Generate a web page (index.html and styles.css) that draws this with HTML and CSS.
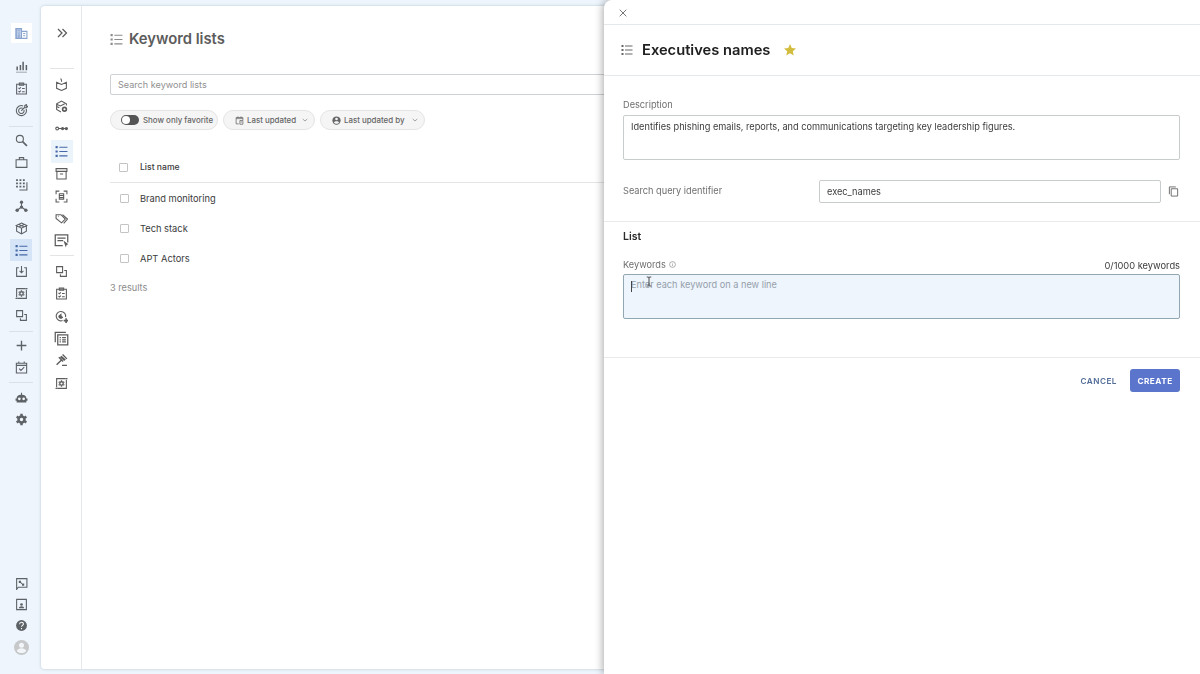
FILE: index.html
```html
<!DOCTYPE html>
<html lang="en">
<head>
    <meta charset="UTF-8">
    <meta name="viewport" content="width=device-width, initial-scale=1.0">
    <title>Keyword lists</title>
    <link rel="stylesheet" href="styles.css">
</head>
<body>
    <!-- icons used more than once -->
    <svg class="sprite">
        <symbol id="list" viewBox="0 0 24 24"><path d="M1 4h4M1 12h4M1 20h4" stroke-width="4"/><path d="M8 4h15M8 12h15M8 20h15"/></symbol>
        <symbol id="clipboard" viewBox="0 0 24 24"><path d="M3 4h18v18H3z"/><path d="M8 2h8v4H8z"/><path d="M6.500 11l1.500 1.500 3-2.500M6.500 17l1.500 1.500 3-2.500M13 12h5M13 18h5"/></symbol>
        <symbol id="squares" viewBox="0 0 24 24"><path d="M3 3h11v11H3z"/><path d="M17 10h4v11H10v-4"/></symbol>
        <symbol id="gearbox" viewBox="0 0 24 24"><path d="M3 19V3h16M21 5v16H5"/><circle cx="12" cy="12" r="3.200" stroke-width="2.500"/><path d="M12 6v2M12 16v2M6.800 9l1.800 1M15.400 14l1.800 1M6.800 15l1.800-1M15.400 10l1.800-1M1 21h4M19 3h4" stroke-width="2.500"/></symbol>
        <symbol id="chevron" viewBox="0 0 24 24"><path d="M3 8l9 8 9-8"/></symbol>
    </svg>

    <div class="app">
        <nav class="primary">
            <a class="logo"><svg viewBox="0 0 24 24"><path class="tower" d="M2 3h10v18H2z"/><path d="M12 8h10v13H2V3h10v18M5 7h4M5 11h4M5 15h4M5 18h4M15 12h4M15 16h4"/></svg></a>
            <a class="item"><svg viewBox="0 0 24 24"><path d="M4 12v7M10 9v10M15 3v16M21 9v10" stroke-width="2.800"/><path d="M2 22.500h20" stroke-width="1"/></svg></a>
            <a class="item"><svg><use href="#clipboard"/></svg></a>
            <a class="item"><svg viewBox="0 0 24 24"><path d="M15 3.500A9.300 9.300 0 1 0 20.500 9M14 8a5 5 0 1 0 2.500 3M11.500 12.500L18 6V3l3-2v3h3l-3 3h-3"/></svg></a>
            <span class="line"></span>
            <a class="item"><svg viewBox="0 0 24 24"><circle cx="9" cy="9" r="6.500"/><path d="M14 14l8 8" stroke-width="3"/></svg></a>
            <a class="item"><svg viewBox="0 0 24 24"><path d="M2 7h20v14H2zM8 7V3h8v4"/></svg></a>
            <a class="item"><svg viewBox="0 0 24 24"><path d="M2 4h16M2 10h16M2 16h16" stroke-width="3.400" stroke-dasharray="3.400 2.900"/><path d="M22 8v14H8"/></svg></a>
            <a class="item"><svg viewBox="0 0 24 24"><path d="M12 5v8L4 19M12 13l8 6"/><g class="fill"><circle cx="12" cy="4" r="3"/><circle cx="12" cy="13" r="3"/><circle cx="4" cy="19" r="3.200"/><circle cx="20" cy="19" r="3.200"/></g></svg></a>
            <a class="item"><svg viewBox="0 0 24 24"><path d="M12 2l10 4.500-10 5-10-5zM3 8v9l9 5 9-5V8M12 12v10M8 5l9 4M16 5L7 9"/></svg></a>
            <a class="item active"><svg><use href="#list"/></svg></a>
            <a class="item"><svg viewBox="0 0 24 24"><path d="M7 5H3v16h18V5h-4M12 2v12M8.500 11l3.500 3.500 3.500-3.500"/></svg></a>
            <a class="item"><svg><use href="#gearbox"/></svg></a>
            <a class="item"><svg><use href="#squares"/></svg></a>
            <span class="line"></span>
            <a class="item"><svg viewBox="0 0 24 24"><path d="M12 3v18M3 12h18" stroke-width="2.500"/></svg></a>
            <a class="item"><svg viewBox="0 0 24 24"><path d="M2.500 4h19v18h-19zM2.500 8h19M7 1v4M17 1v4M7.500 14l3.500 3.500 6-6"/></svg></a>
            <span class="line"></span>
            <a class="item"><svg viewBox="0 0 24 24"><path class="fill" d="M11 7V3h2v4c5 0 8 3 8 7h2v4h-2v3H3v-3H1v-4h2c0-4 3-7 8-7z"/><circle class="hole" cx="8" cy="14.500" r="2.500"/><circle class="hole" cx="16" cy="14.500" r="2.500"/></svg></a>
            <a class="item"><svg viewBox="0 0 24 24"><circle cx="12" cy="12" r="5.500" stroke-width="4.500"/><path d="M12 1.500v4M12 18.500v4M3 6.700l3.400 2M17.600 15.300l3.400 2M3 17.300l3.400-2M17.600 8.700l3.400-2" stroke-width="4.500"/></svg></a>
            <div class="bottom">
                <a class="item"><svg viewBox="0 0 24 24"><path d="M3 23V3h19v16H6zM8 8l8 7M8 11V8h3M16 12v3h-3"/></svg></a>
                <a class="item"><svg viewBox="0 0 24 24"><path d="M3 2.500h18v19H3z"/><circle class="fill" cx="12" cy="12" r="2.500"/><path class="fill" d="M7 19c0-5 10-5 10 0z"/></svg></a>
                <a class="item"><svg viewBox="0 0 24 24"><circle class="fill" cx="12" cy="12" r="10"/><path class="mark" d="M8.500 9.500c0-5 7-4.500 7-.5 0 3-3.500 2.500-3.500 5.500M12 16.500v2.500"/></svg></a>
                <a class="item avatar"><svg viewBox="0 0 24 24"><circle class="fill" cx="12" cy="12" r="12"/><circle class="face" cx="12" cy="8.500" r="4"/><path class="face" d="M4.500 17.500c2-5.500 13-5.500 15 0-3.500 4.500-11.500 4.500-15 0z"/></svg></a>
            </div>
        </nav>

        <div class="page">
            <nav class="secondary">
                <a class="expand"><svg viewBox="0 0 24 24"><path d="M4 4l8 8-8 8M13 4l8 8-8 8"/></svg></a>
                <span class="line"></span>
                <a class="item"><svg viewBox="0 0 24 24"><path d="M12 12L3 8v11l9 4 9-4V8zM12 4v3M10.500 1l1.500 3"/></svg></a>
                <a class="item"><svg viewBox="0 0 24 24"><path d="M11 22l-8-4.500V7l9-5 9 5v3M3 12l5 2.500M3 8l7 3 8-4"/><circle cx="17.500" cy="17" r="3.500" stroke-width="3"/></svg></a>
                <a class="item"><svg viewBox="0 0 24 24"><circle cx="4" cy="12" r="2.600"/><path d="M7 12h14"/><circle class="fill" cx="14" cy="12" r="3"/><circle class="fill" cx="21" cy="12" r="3"/></svg></a>
                <a class="item active"><svg><use href="#list"/></svg></a>
                <a class="item"><svg viewBox="0 0 24 24"><path d="M2 3h20v5H2zM3.500 8v14h17V8M9 13h6"/></svg></a>
                <a class="item"><svg viewBox="0 0 24 24"><path d="M2 8V2h6M16 2h6v6M22 16v6h-6M8 22H2v-6M8 7h8v10H8zM8 10h8M8 14h8"/></svg></a>
                <a class="item"><svg viewBox="0 0 24 24"><path d="M2 5h9l8 8-7 7L2 12zM14 5l9 8-7 8M5.500 8h1"/></svg></a>
                <a class="item big"><svg viewBox="0 0 24 24"><path d="M14 20H2V3h20v12M5.500 8h13M5.500 12h9"/><path class="fill" d="M15 12l8 6-3 1-1 4z"/></svg></a>
                <span class="line"></span>
                <a class="item"><svg><use href="#squares"/></svg></a>
                <a class="item"><svg><use href="#clipboard"/></svg></a>
                <a class="item"><svg viewBox="0 0 24 24"><path d="M14 19.500A8.700 8.700 0 1 1 19.500 13"/><path class="fill" d="M12 6v5l3 2c-1 5-9 4-9-2zM19 15v3h-3v3h3v3h3v-3h2v-3h-2v-3z"/></svg></a>
                <a class="item big"><svg viewBox="0 0 24 24"><path d="M2 18V2h17M6 6h16v16H6zM9 10.500h2M9 14h2M9 17.500h2M13 10.500h6M13 14h6M13 17.500h6"/></svg></a>
                <a class="item"><svg viewBox="0 0 24 24"><path class="fill" d="M12 3l8 7-3 3-8-7z"/><path d="M14 1l8 8M7 6l8 8M12 11l-9 9M13 21h9" stroke-width="2.500"/></svg></a>
                <a class="item"><svg><use href="#gearbox"/></svg></a>
            </nav>

            <main class="content">
                <h1><svg><use href="#list"/></svg><span>Keyword lists</span></h1>
                <div class="search">Search keyword lists</div>
                <div class="filters">
                    <div class="chip favorite"><i class="toggle"></i><span>Show only favorite</span></div>
                    <div class="chip"><svg class="chip-icon" viewBox="0 0 24 24"><path d="M21 11V4H3v17h7M3 7h18M8 1v4M16 1v4M13 12h8v10h-8zM15 16h4"/></svg><span>Last updated</span><svg class="arrow"><use href="#chevron"/></svg></div>
                    <div class="chip"><svg class="chip-icon" viewBox="0 0 24 24"><circle class="fill" cx="12" cy="12" r="11"/><circle class="face" cx="12" cy="8" r="3.500"/><path class="face" d="M5 17c2-4 12-4 14 0-3 5-11 5-14 0z"/></svg><span>Last updated by</span><svg class="arrow"><use href="#chevron"/></svg></div>
                </div>
                <div class="table">
                    <div class="row head"><i class="checkbox"></i><span>List name</span></div>
                    <div class="row"><i class="checkbox"></i><span>Brand monitoring</span></div>
                    <div class="row"><i class="checkbox"></i><span>Tech stack</span></div>
                    <div class="row"><i class="checkbox"></i><span>APT Actors</span></div>
                </div>
                <p class="results">3 results</p>
            </main>
        </div>
    </div>

    <aside class="drawer">
        <div class="drawer-top"><svg viewBox="0 0 24 24"><path d="M2 2l20 20M22 2L2 22"/></svg></div>
        <header class="drawer-header">
            <svg class="list-icon"><use href="#list"/></svg>
            <h2>Executives names</h2>
            <svg class="star" viewBox="0 0 24 24"><path d="M12 0l3.500 8 8.500.8-6.400 5.700L19.500 23 12 18.500 4.500 23l1.900-8.500L0 8.800 8.500 8z"/></svg>
        </header>
        <section class="details">
            <label>Description</label>
            <div class="textarea"><span>Identifies phishing emails, reports, and communications targeting key leadership figures.</span></div>
            <div class="identifier">
                <label>Search query identifier</label>
                <div class="input">exec_names</div>
                <svg viewBox="0 0 24 24"><path d="M3 18V2h14M7 6h14v16H7z"/></svg>
            </div>
        </section>
        <section class="list">
            <h3>List</h3>
            <div class="keywords-label">
                <label>Keywords</label>
                <svg viewBox="0 0 24 24"><circle cx="12" cy="12" r="10"/><path d="M12 11v6M12 6.500v2"/></svg>
                <span class="count">0/1000 keywords</span>
            </div>
            <div class="textarea focus">
                <i class="caret"></i><span>Enter each keyword on a new line</span>
                <svg class="pointer" viewBox="0 0 8 14"><path d="M1 1c2 0 3 0 3 1.500V11.500C4 13 3 13 1 13M7 1C5 1 4 1 4 2.500M7 13c-2 0-3 0-3-1.500"/></svg>
            </div>
        </section>
        <footer class="actions">
            <button class="button">CANCEL</button>
            <button class="button create">CREATE</button>
        </footer>
    </aside>
</body>
</html>
```
FILE: styles.css
```css
* {
    box-sizing: border-box;
}
body {
    margin: 0;
    height: 674px;
    overflow: hidden;
    background-color: #eef5fc;
    font-family: Inter, "Liberation Sans", sans-serif;
    font-size: 9.2px;
    color: #3b3b3b;
}
h1, h2, h3, p {
    margin: 0;
}
svg {
    display: block;
    flex: none;
    fill: none;
    stroke: currentColor;
    stroke-width: 2;
}
span, label {
    white-space: nowrap;
}
.sprite {
    display: none;
}
.fill {
    fill: currentColor;
    stroke: none;
}
.face, .hole {
    fill: #f3f6f9;
    stroke: none;
}
.mark {
    stroke: #fff;
}
.app {
    display: flex;
    height: 674px;
}

/* navigation */
.primary {
    display: flex;
    flex-direction: column;
    align-items: center;
    width: 41px;
    padding: 23px 0 16px 1px;
    color: #5d6267;
}
.logo {
    display: flex;
    align-items: center;
    justify-content: center;
    width: 21px;
    height: 20px;
    margin-bottom: 13px;
    background-color: #fff;
    color: #8aa4cf;
}
.logo svg {
    width: 13px;
    height: 13px;
}
.tower {
    fill: #c2d1eb;
}
.item {
    display: flex;
    align-items: center;
    justify-content: center;
    width: 22px;
    height: 21.9px;
}
.item svg {
    width: 13px;
    height: 13px;
}
.item.big svg {
    width: 15px;
    height: 15px;
}
.item.active {
    background-color: #d5e4f6;
    color: #4668a8;
}
.item.avatar {
    color: #c6c8ca;
}
.avatar svg {
    width: 15px;
    height: 15px;
}
.line {
    width: 24px;
    height: 1px;
    margin: 4px 0 3px;
    background-color: #d9e1e8;
}
.bottom {
    margin-top: auto;
}
.bottom .item {
    height: 21.4px;
}
.page {
    display: flex;
    flex: 1;
    height: 663px;
    margin-top: 6px;
    border-radius: 4px 0 0 4px;
    background-color: #fff;
    box-shadow: 0 0 3px rgba(70, 90, 110, 0.3);
}
.secondary {
    display: flex;
    flex-direction: column;
    align-items: center;
    width: 41px;
    padding: 21px 0 0 1px;
    border-right: 1px solid #e6e9ec;
    color: #5c5c5c;
}
.secondary .expand svg {
    width: 12px;
    height: 12px;
    stroke-width: 2.500;
}
.secondary .item {
    height: 22.4px;
}
.secondary .item.active {
    background-color: #ecf4fb;
}
.secondary .line {
    margin: 3px 0 4px;
    background-color: #e4e4e4;
}
.secondary .expand + .line {
    margin: 29px 0 4px;
}

/* keyword lists */
.content {
    flex: 1;
    padding: 23px 0 0 28px;
}
h1 {
    display: flex;
    align-items: center;
    height: 20px;
    font-size: 14.8px;
    font-weight: 600;
    color: #5c5c5c;
}
h1 svg {
    width: 13px;
    height: 13px;
    margin-right: 6px;
    color: #8b8b8b;
}
.search {
    height: 21px;
    margin-top: 25px;
    padding-left: 7px;
    border: 1px solid #cfd2d4;
    border-radius: 2px;
    line-height: 19px;
    font-size: 9.1px;
    color: #909090;
}
.filters {
    display: flex;
    gap: 5px;
    margin-top: 15px;
}
.chip {
    display: flex;
    align-items: center;
    height: 20px;
    width: 92px;
    padding: 0 6px 0 11px;
    border: 1px solid #e4e4e4;
    border-radius: 10px;
    background-color: #f5f5f5;
    font-size: 7.9px;
    font-weight: 500;
    color: #666;
}
.chip.favorite {
    width: 108px;
    padding-left: 10px;
}
.chip:last-child {
    width: 105px;
}
.chip-icon {
    width: 9px;
    height: 9px;
    margin-right: 3px;
}
.arrow {
    width: 6px;
    height: 6px;
    margin-left: auto;
    color: #888;
    stroke-width: 3;
}
.toggle {
    flex: none;
    width: 18px;
    height: 10px;
    margin-right: 4px;
    border-radius: 5px;
    background-color: #555;
}
.toggle::before {
    content: '';
    display: block;
    width: 8px;
    height: 8px;
    margin: 1px;
    border-radius: 50%;
    background-color: #fff;
}
.table {
    margin-top: 22px;
}
.row {
    display: flex;
    align-items: center;
    height: 30px;
    padding-left: 10px;
    font-size: 9.3px;
}
.row.head {
    height: 31px;
    padding-left: 9px;
    border-bottom: 1px solid #e5e5e5;
    font-size: 8.6px;
    font-weight: 500;
}
.checkbox {
    width: 9px;
    height: 9px;
    margin-right: 11px;
    border: 1px solid #c4c4c4;
    border-radius: 1px;
}
.head .checkbox {
    margin-right: 12px;
}
.results {
    margin-top: 8px;
    line-height: 14px;
    color: #8b8b8b;
}

/* drawer */
.drawer {
    position: fixed;
    top: 0;
    right: 0;
    bottom: 0;
    width: 596px;
    border-radius: 8px 0 0 0;
    background-color: #fff;
    box-shadow: -1px 0 8px rgba(0, 0, 0, 0.35);
}
.drawer-top {
    height: 25px;
    padding: 9px 0 0 15px;
    border-bottom: 1px solid #e5e8ea;
    color: #777;
}
.drawer-top svg {
    width: 8px;
    height: 8px;
    stroke-width: 3;
}
.drawer-header {
    display: flex;
    align-items: center;
    height: 51px;
    padding-left: 17px;
    border-bottom: 1px solid #e5e8ea;
}
.list-icon {
    width: 12px;
    height: 12px;
    color: #666;
}
h2 {
    margin: 0 14px 0 9px;
    font-size: 14.7px;
    font-weight: 600;
    color: #202020;
}
.star {
    width: 12px;
    height: 12px;
    stroke: none;
    fill: #d2bd3f;
}
.details {
    height: 146px;
    padding: 22px 20px 0 19px;
    border-bottom: 1px solid #e8eaec;
}
label {
    color: #6e6e6e;
}
.details > label {
    display: block;
    line-height: 14px;
}
.textarea {
    position: relative;
    height: 45px;
    margin-top: 3px;
    padding: 4px 7px;
    border: 1px solid #c9cccd;
    border-radius: 2px;
    line-height: 14px;
}
.identifier {
    display: flex;
    align-items: center;
    margin-top: 20px;
}
.identifier label {
    width: 196px;
    padding-bottom: 3px;
}
.identifier .input {
    width: 342px;
    height: 23px;
    padding-left: 7px;
    border: 1px solid #c9cccd;
    border-radius: 2px;
    line-height: 21px;
}
.identifier svg {
    width: 11px;
    height: 11px;
    margin-left: 7px;
    color: #666;
}
.list {
    height: 136px;
    padding: 7px 20px 0 19px;
    border-bottom: 1px solid #e8eaec;
}
h3 {
    line-height: 16px;
    font-size: 10.5px;
    font-weight: 600;
    color: #2b2b2b;
}
.keywords-label {
    display: flex;
    align-items: center;
    height: 14px;
    margin-top: 12px;
}
.keywords-label svg {
    width: 7px;
    height: 7px;
    margin-left: 3px;
    color: #777;
}
.count {
    margin-left: auto;
    padding-top: 2px;
    font-size: 9.3px;
}
.textarea.focus {
    padding-top: 3px;
    border-color: #93a7b3;
    background-color: #eef5fc;
    color: #95a0ab;
}
.caret {
    position: absolute;
    top: 6px;
    left: 7px;
    width: 1px;
    height: 11px;
    background-color: #444;
}
.pointer {
    position: absolute;
    top: 1px;
    left: 22px;
    width: 6px;
    height: 11px;
    stroke-width: 1.200;
    color: #333;
}
.actions {
    display: flex;
    justify-content: flex-end;
    padding: 11px 20px 0 0;
}
.button {
    height: 23px;
    padding: 0;
    border: 0;
    border-radius: 3px;
    background: none;
    font-family: inherit;
    font-size: 8.2px;
    font-weight: 600;
    letter-spacing: 0.5px;
    color: #526c98;
}
.button.create {
    width: 50px;
    margin-left: 13px;
    background-color: #5a75cb;
    font-weight: 700;
    color: #fff;
}
```
